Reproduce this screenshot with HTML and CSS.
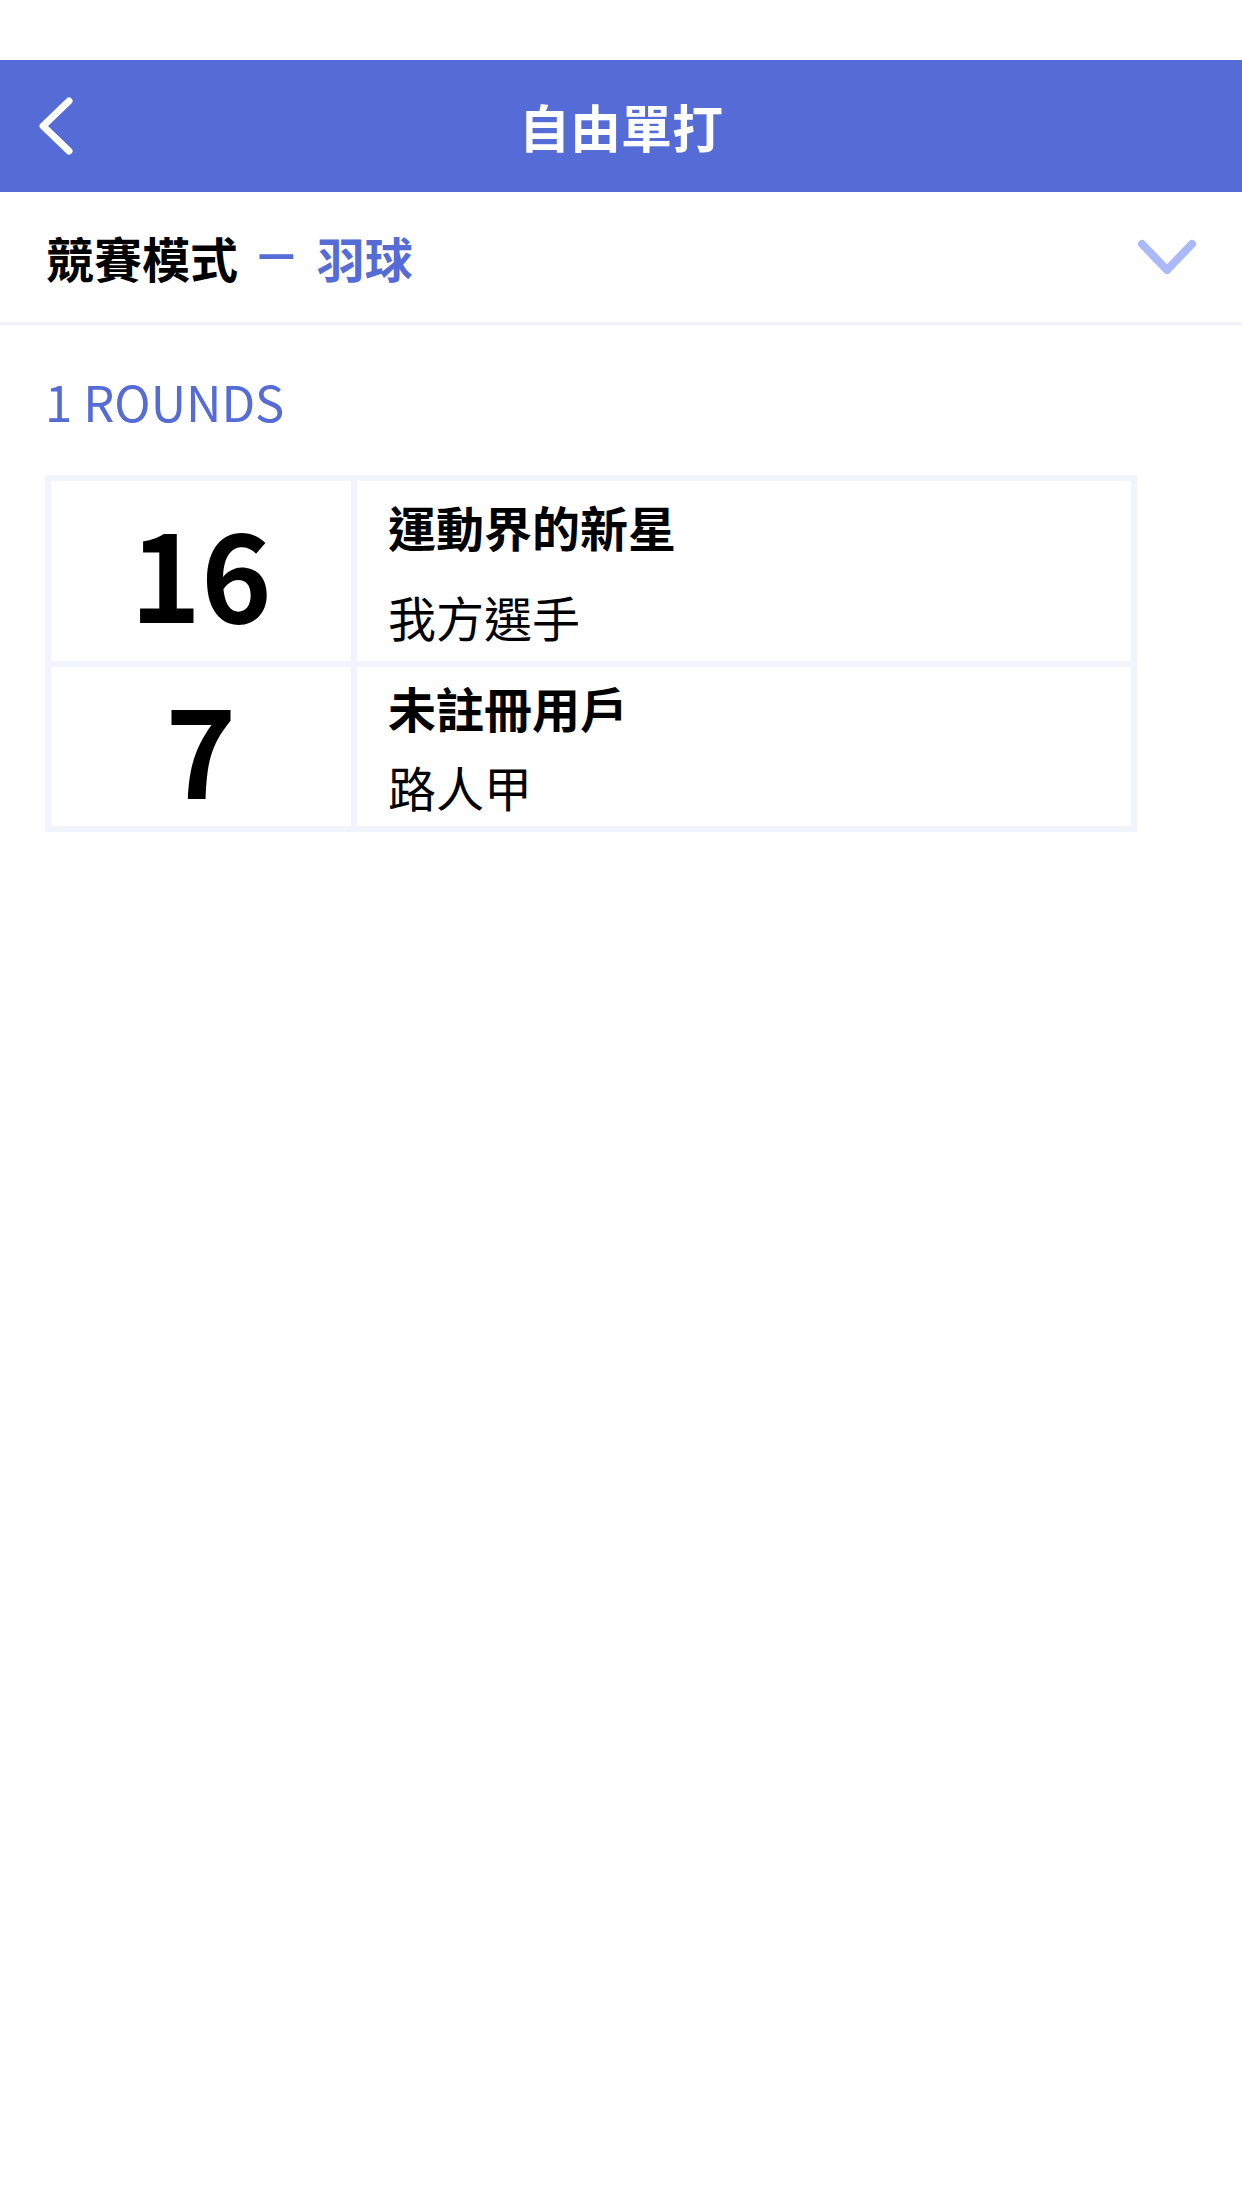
FILE: index.html
```html
<!DOCTYPE html>
<html lang="zh-Hant">
<head>
<meta charset="utf-8">
<title>自由單打</title>
<link rel="stylesheet" href="styles.css">
</head>
<body>
<div class="statusbar"></div>
<header class="nav">
  <div class="nav-left">
    <svg class="back-icon" width="40" height="60" viewBox="0 0 40 60" aria-hidden="true">
      <path d="M33 5 L7 30 L33 55" fill="none" stroke="#ffffff" stroke-width="7" stroke-linecap="round" stroke-linejoin="round"/>
    </svg>
  </div>
  <h1 class="nav-title">自由單打</h1>
  <div class="nav-right"></div>
</header>
<section class="mode-row">
  <div class="mode-label">競賽模式<span class="mode-dash">–</span><span class="mode-sport">羽球</span></div>
  <svg class="mode-chevron" width="64" height="40" viewBox="0 0 64 40" aria-hidden="true">
    <path d="M7 7 L32 33 L57 7" fill="none" stroke="#abb9f9" stroke-width="8" stroke-linecap="round" stroke-linejoin="round"/>
  </svg>
</section>
<main class="content">
  <div class="rounds">1 ROUNDS</div>
  <div class="score-table">
    <div class="score-cell">16</div>
    <div class="info-cell">
      <div class="player-name">運動界的新星</div>
      <div class="player-role">我方選手</div>
    </div>
    <div class="score-cell">7</div>
    <div class="info-cell">
      <div class="player-name">未註冊用戶</div>
      <div class="player-role">路人甲</div>
    </div>
  </div>
</main>
</body>
</html>
```
FILE: styles.css
```css
* {
  box-sizing: border-box;
}

html, body {
  margin: 0;
  padding: 0;
  background: #ffffff;
}

body {
  width: 1242px;
  height: 2208px;
  font-family: "Noto Sans CJK TC", "Noto Sans", sans-serif;
  color: #000000;
}

.statusbar {
  height: 60px;
  background: #ffffff;
}

.nav {
  height: 132px;
  background: #556bd6;
  display: grid;
  grid-template-columns: 1fr auto 1fr;
  align-items: center;
}

.nav-left {
  display: flex;
  align-items: center;
  padding-left: 36px;
}

.back-icon {
  display: block;
}

.nav-title {
  margin: 0;
  font-size: 51px;
  font-weight: 700;
  color: #ffffff;
  line-height: normal;
}

.mode-row {
  height: 130px;
  display: flex;
  align-items: center;
  justify-content: space-between;
  padding: 0 43px 0 46px;
  border-bottom: 3px solid #f2f4fd;
  box-sizing: content-box;
}

.mode-label {
  font-size: 48px;
  font-weight: 700;
  line-height: 70px;
  white-space: nowrap;
}

.mode-dash {
  color: #556bd6;
  font-size: 76px;
  font-weight: 400;
  line-height: 0;
  margin: 0 20px 0 18px;
}

.mode-sport {
  color: #556bd6;
}

.mode-chevron {
  display: block;
}

.content {
  padding: 42px 45px 0 45px;
}

.rounds {
  font-size: 49px;
  font-weight: 400;
  line-height: 68px;
  color: #556bd6;
  margin-bottom: 40px;
}

.score-table {
  width: 1092px;
  display: grid;
  grid-template-columns: 300px 774px;
  grid-template-rows: 180px 159px;
  gap: 6px;
  padding: 6px;
  background: #f2f4fd;
}

.score-cell {
  background: #ffffff;
  display: flex;
  align-items: center;
  justify-content: center;
  font-size: 120px;
  font-weight: 700;
  line-height: 1;
}

.info-cell {
  background: #ffffff;
  display: flex;
  flex-direction: column;
  justify-content: space-around;
  padding-left: 31px;
}

.player-name {
  font-size: 48px;
  font-weight: 700;
  line-height: normal;
}

.player-role {
  font-size: 48px;
  font-weight: 400;
  line-height: normal;
}
```
